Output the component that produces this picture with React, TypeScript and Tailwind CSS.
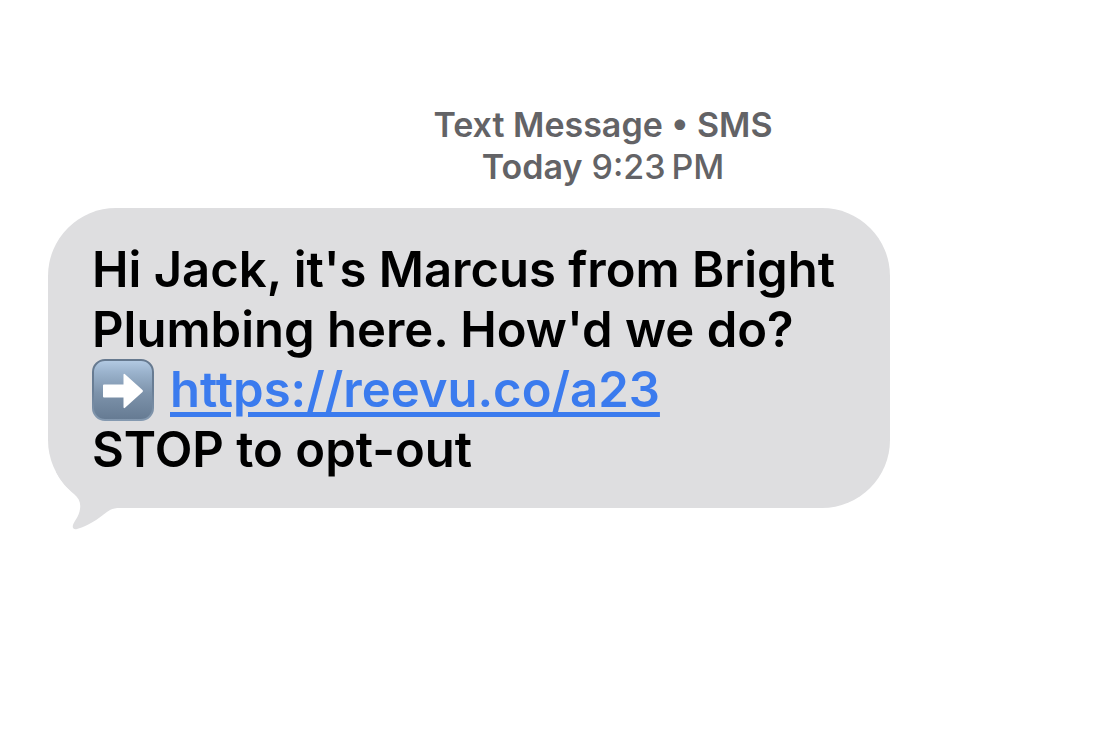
import React from 'react';

interface Message {
  lines: string[];
  link: string;
  footer: string;
}

const message: Message = {
  lines: ["Hi Jack, it's Marcus from Bright", "Plumbing here. How'd we do?"],
  link: 'https://reevu.co/a23',
  footer: 'STOP to opt-out',
};

const ArrowEmoji = () => (
  <svg viewBox="0 0 62 62" className="size-[62px] shrink-0" role="img" aria-label="Right arrow">
    <defs>
      <linearGradient id="tile" x1="0" y1="0" x2="0" y2="1">
        <stop offset="0" stopColor="#b4cbe4" />
        <stop offset="0.2" stopColor="#9bb3cd" />
        <stop offset="0.55" stopColor="#7d93ab" />
        <stop offset="1" stopColor="#657a92" />
      </linearGradient>
      <linearGradient id="edge" x1="0" y1="0" x2="0" y2="1">
        <stop offset="0" stopColor="#66798f" />
        <stop offset="0.5" stopColor="#697e96" />
        <stop offset="1" stopColor="#8499b0" />
      </linearGradient>
    </defs>
    <rect x="1" y="1" width="60" height="60" rx="12" fill="url(#tile)" stroke="url(#edge)" strokeWidth="2" />
    <path
      d="M12 25.500H31.500V16Q31.500 14 33.300 15.500L50.500 31Q51.500 32 50.500 33L33.300 48.500Q31.500 50 31.500 48V38.500H12Q11 38.500 11 37.500V26.500Q11 25.500 12 25.500Z"
      fill="#fff"
    />
  </svg>
);

const BubbleTail = () => (
  <svg viewBox="0 0 72 60" className="absolute -bottom-[22px] left-[6px] h-[60px] w-[72px]" aria-hidden="true">
    <path
      d="M2 2C7 12 14 19 20 24C25 28 27 33 26 39C25 47 20 51 19 55C18 58 20 60 23 59C38 55 48 45 56 40C59 38.500 62 38 66 38H72V2Z"
      fill="#dedee0"
    />
  </svg>
);

const App = () => {
  return (
    <main className="min-h-screen bg-white pt-[104px] font-['Inter',sans-serif]">
      <header className="pl-[106px] text-center text-[34px] leading-[42px] font-medium text-[#636366]">
        <p className="font-semibold">Text Message • SMS</p>
        <p>
          <span className="font-semibold">Today</span> 9:23&#8201;PM
        </p>
      </header>

      <section className="relative mt-5 ml-12 w-fit max-w-[842px] rounded-[68px] bg-[#dedee0] pt-8 pr-[55px] pb-7 pl-[44px] text-[49px] leading-[60px] font-semibold text-black">
        {message.lines.map((line) => (
          <p key={line} className="whitespace-nowrap">
            {line}
          </p>
        ))}
        <p className="flex h-[60px] items-center gap-4 whitespace-nowrap">
          <ArrowEmoji />
          <a
            href={message.link}
            className="text-[#3b7bee] underline decoration-[5px] underline-offset-[5px]"
          >
            {message.link}
          </a>
        </p>
        <p>{message.footer}</p>
        <BubbleTail />
      </section>
    </main>
  );
};

export default App;
